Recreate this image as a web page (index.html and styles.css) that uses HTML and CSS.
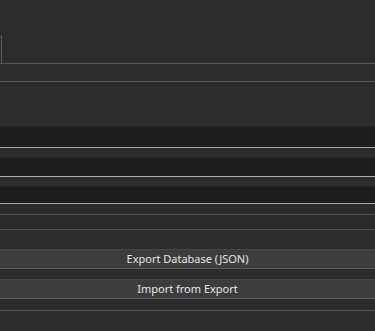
FILE: index.html
```html
<!DOCTYPE html>
<html>
<head>
<meta charset="utf-8">
<link rel="stylesheet" href="styles.css">
</head>
<body>
<div class="panel">
  <div class="top">
    <div class="stub"></div>
  </div>
  <div class="row row-a"></div>
  <div class="row row-b"></div>
  <div class="inputs">
    <div class="input in1"></div>
    <div class="gap"></div>
    <div class="input in2"></div>
    <div class="gap"></div>
    <div class="input in3"></div>
    <div class="gap2"></div>
  </div>
  <div class="row row-c"></div>
  <div class="row row-d"></div>
  <button class="btn">Export Database (JSON)</button>
  <div class="spacer"></div>
  <button class="btn">Import from Export</button>
  <div class="spacer2"></div>
  <div class="rest"></div>
</div>
</body>
</html>
```
FILE: styles.css
```css
html, body {
  margin: 0;
  padding: 0;
  background: #2c2c2c;
  overflow: hidden;
}
.panel {
  width: 375px;
  height: 331px;
  display: flex;
  flex-direction: column;
  font-family: "Noto Sans", "Open Sans", sans-serif;
}
.top {
  height: 63px;
  display: flex;
  align-items: flex-end;
  border-bottom: 1px solid #585858;
  flex-shrink: 0;
}
.stub {
  width: 1px;
  height: 26px;
  border-top: 1px solid #5a5a5a;
  border-right: 1px solid #5a5a5a;
}
.row-a {
  height: 17px;
  border-bottom: 1px solid #585858;
  flex-shrink: 0;
}
.row-b {
  height: 44px;
  flex-shrink: 0;
}
.inputs {
  display: flex;
  flex-direction: column;
  flex-shrink: 0;
}
.input {
  background: #1e1e1e;
  border-top: 1px solid #262626;
  border-bottom: 1px solid #a9a9a9;
}
.in1 { height: 20px; }
.in2 { height: 18px; }
.in3 { height: 16px; }
.gap { height: 9px; }
.gap2 { height: 10px; border-bottom: 1px solid #555555; }
.row-c {
  height: 14px;
  background: #2a2a2a;
  border-bottom: 1px solid #555555;
  flex-shrink: 0;
}
.row-d {
  height: 19px;
  flex-shrink: 0;
}
.btn {
  display: block;
  width: 100%;
  height: 20px;
  margin: 0;
  padding: 0;
  flex-shrink: 0;
  background: #3c3c3c;
  border: none;
  border-top: 1px solid #474747;
  border-bottom: 1px solid #5c5c5c;
  color: #e6e6e6;
  font-family: "Noto Sans", "Open Sans", sans-serif;
  font-size: 11px;
  line-height: 18px;
  text-align: center;
}
.spacer {
  height: 10px;
  flex-shrink: 0;
}
.spacer2 {
  height: 11px;
  border-bottom: 1px solid #555555;
  flex-shrink: 0;
}
.rest {
  flex: 1;
}
```
